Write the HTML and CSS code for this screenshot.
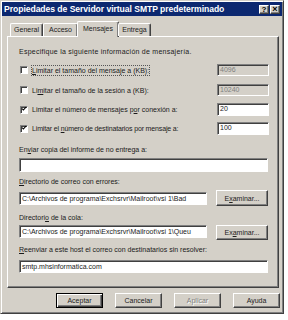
FILE: index.html
```html
<!DOCTYPE html>
<html lang="es">
<head>
<meta charset="utf-8">
<title>Propiedades de Servidor virtual SMTP predeterminado</title>
<link rel="stylesheet" href="styles.css">
</head>
<body>
<div class="window">
  <div class="titlebar">
    <span class="title">Propiedades de Servidor virtual SMTP predeterminado</span>
    <div class="tbtns"><span class="tbtn">?</span><span class="tbtn close">×</span></div>
  </div>
  <div class="content">
    <div class="tabs">
      <div class="tab t-general">General</div>
      <div class="tab t-acceso">Acceso</div>
      <div class="tab active">Mensajes</div>
      <div class="tab t-entrega">Entrega</div>
    </div>
    <div class="panel">
      <p class="intro">Especifique la siguiente información de mensajería.</p>
      <div class="crow r1">
        <span class="cb"></span>
        <span class="lbl focus"><u>L</u>imitar el tamaño del mensaje a (KB):</span>
        <span class="num dis">4096</span>
      </div>
      <div class="crow r2">
        <span class="cb"></span>
        <span class="lbl">Li<u>m</u>itar el tamaño de la sesión a (KB):</span>
        <span class="num dis">10240</span>
      </div>
      <div class="crow r3">
        <span class="cb"><svg viewBox="0 0 8 8" width="8" height="8"><path d="M1.5 3.5 L3.2 5.4 L6.6 1.6" fill="none" stroke="#000" stroke-width="1.4"/></svg></span>
        <span class="lbl">Limitar el número de mensajes p<u>o</u>r conexión a:</span>
        <span class="num">20</span>
      </div>
      <div class="crow r4">
        <span class="cb"><svg viewBox="0 0 8 8" width="8" height="8"><path d="M1.5 3.5 L3.2 5.4 L6.6 1.6" fill="none" stroke="#000" stroke-width="1.4"/></svg></span>
        <span class="lbl tight">Limitar el <u>n</u>úmero de destinatarios por mensaje a:</span>
        <span class="num">100</span>
      </div>
      <p class="flabel l-enviar">En<u>v</u>iar copia del informe de no entrega a:</p>
      <div class="field full f-enviar"></div>
      <p class="flabel l-errores"><u>D</u>irectorio de correo con errores:</p>
      <div class="frow r-errores">
        <div class="field path">C:\Archivos de programa\Exchsrvr\Mailroot\vsi 1\Bad</div>
        <span class="btn browse">E<u>x</u>aminar...</span>
      </div>
      <p class="flabel l-cola">Directori<u>o</u> de la cola:</p>
      <div class="frow r-cola">
        <div class="field path">C:\Archivos de programa\Exchsrvr\Mailroot\vsi 1\Queu</div>
        <span class="btn browse">Ex<u>a</u>minar...</span>
      </div>
      <p class="flabel l-reenviar"><u>R</u>eenviar a este host el correo con destinatarios sin resolver:</p>
      <div class="field full f-reenviar">smtp.mhsinformatica.com</div>
    </div>
    <div class="buttons">
      <span class="btn dlg default">Aceptar</span>
      <span class="btn dlg">Cancelar</span>
      <span class="btn dlg disabled">Aplicar</span>
      <span class="btn dlg">Ayuda</span>
    </div>
  </div>
</div>
</body>
</html>
```
FILE: styles.css
```css
* { box-sizing: border-box; }
html, body { margin: 0; padding: 0; background: #ffffff; }
body {
  font-family: "Liberation Sans", Arial, sans-serif;
  font-size: 7px;
  color: #1a1a1a;
}
p { margin: 0; }
u { text-decoration: underline; text-underline-offset: 1px; }

.window {
  width: 284px;
  height: 314px;
  background: #d4d0c8;
  border: 1px solid;
  border-color: #d4d0c8 #404040 #404040 #d4d0c8;
  box-shadow: inset 1px 1px #ffffff, inset -1px -1px #808080;
  padding: 1px;
  display: flex;
  flex-direction: column;
}

.titlebar {
  height: 14px;
  background: #0c2870;
  display: flex;
  align-items: center;
  justify-content: space-between;
  padding: 0 2px 0 2px;
}
.title {
  color: #ffffff;
  font-weight: bold;
  font-size: 8.6px;
  white-space: nowrap;
  letter-spacing: -0.05px;
}
.tbtns { display: flex; gap: 0; }
.tbtn {
  width: 10px;
  height: 9px;
  background: #d4d0c8;
  border: 1px solid;
  border-color: #ffffff #404040 #404040 #ffffff;
  box-shadow: inset -1px -1px #808080;
  color: #000;
  font-size: 8px;
  font-weight: bold;
  line-height: 7px;
  text-align: center;
  display: flex;
  align-items: center;
  justify-content: center;
}
.tbtn.close { margin-left: 1px; font-size: 9px; }

.content {
  padding: 5px 0 0 5px;
  display: flex;
  flex-direction: column;
}

.tabs {
  display: flex;
  align-items: flex-end;
  padding-left: 3px;
  height: 15px;
  position: relative;
  z-index: 1;
}
.tab {
  height: 13px;
  border: 1px solid;
  border-bottom: none;
  border-color: #ffffff #404040 #404040 #ffffff;
  box-shadow: inset -1px 0 #808080;
  border-radius: 2px 2px 0 0;
  text-align: center;
  line-height: 11px;
  color: #222;
}
.t-general { width: 33px; }
.t-acceso { width: 35px; }
.t-entrega { width: 33px; }
.tab.active {
  width: 42px;
  height: 16px;
  margin: 0 0 -1px -1px;
  background: #d4d0c8;
  line-height: 13px;
}
.tab.active + .tab { margin-left: -1px; }

.panel {
  width: 272px;
  height: 252px;
  border: 1px solid;
  border-color: #ffffff #404040 #404040 #ffffff;
  box-shadow: inset -1px -1px #808080;
  padding: 10px 9px 0 11px;
  display: flex;
  flex-direction: column;
}
.intro { line-height: 10px; height: 10px; letter-spacing: 0.25px; }

.crow {
  display: flex;
  align-items: center;
  height: 12px;
}
.r1 { margin-top: 7px; }
.r2 { margin-top: 8px; }
.r3 { margin-top: 7px; height: 13px; }
.r4 { margin-top: 6px; height: 13px; }
.cb {
  width: 8px;
  height: 8px;
  margin-left: 1px;
  background: #ffffff;
  border: 1px solid;
  border-color: #808080 #ffffff #ffffff #808080;
  box-shadow: inset 1px 1px #404040;
  display: flex;
  align-items: center;
  justify-content: center;
  flex: none;
}
.cb svg { display: block; margin: -1px 0 0 0; }
.lbl {
  margin-left: 4px;
  flex: 1;
  line-height: 9px;
  white-space: nowrap;
}
.lbl.tight { letter-spacing: -0.15px; }
.lbl.focus { flex: none; outline: 1px dotted #555; outline-offset: 0; margin-right: auto; }
.num {
  width: 52px;
  height: 100%;
  background: #ffffff;
  border: 1px solid;
  border-color: #808080 #ffffff #ffffff #808080;
  box-shadow: inset 1px 1px #404040;
  padding: 0 2px;
  line-height: 10px;
  flex: none;
}
.num.dis { background: #d4d0c8; color: #808080; box-shadow: inset 1px 1px #404040; }

.flabel { line-height: 10px; height: 10px; white-space: nowrap; }
.l-enviar { margin-top: 10px; }
.l-errores { margin-top: 5px; }
.l-cola { margin-top: 7px; }
.l-reenviar { margin-top: 5px; }

.field {
  height: 13px;
  background: #ffffff;
  border: 1px solid;
  border-color: #808080 #ffffff #ffffff #808080;
  box-shadow: inset 1px 1px #404040;
  padding: 0 2px;
  line-height: 11px;
  white-space: nowrap;
  overflow: hidden;
}
.full { width: 249px; }
.f-enviar { margin-top: 3px; height: 14px; }
.f-reenviar { margin-top: 5px; }

.frow {
  display: flex;
  align-items: center;
  justify-content: space-between;
  width: 249px;
}
.r-errores { margin-top: 3px; height: 16px; }
.r-cola { margin-top: 2px; height: 15px; align-items: flex-start; }
.path { width: 188px; flex: none; }

.btn {
  background: #d4d0c8;
  border: 1px solid;
  border-color: #ffffff #404040 #404040 #ffffff;
  box-shadow: inset -1px -1px #808080;
  display: flex;
  align-items: center;
  justify-content: center;
  color: #222;
  white-space: nowrap;
}
.browse { width: 52px; height: 16px; }
.r-cola .browse { height: 15px; }

.buttons {
  display: flex;
  justify-content: flex-end;
  gap: 12px;
  margin-top: 5px;
  padding-right: 2px;
}
.dlg { width: 47px; height: 15px; }
.dlg.default {
  border: 1px solid #000;
  box-shadow: inset 1px 1px #ffffff, inset -1px -1px #404040, inset -2px -2px #808080;
}
.dlg.disabled { color: #808080; text-shadow: 1px 1px 0 #ffffff; }
```
